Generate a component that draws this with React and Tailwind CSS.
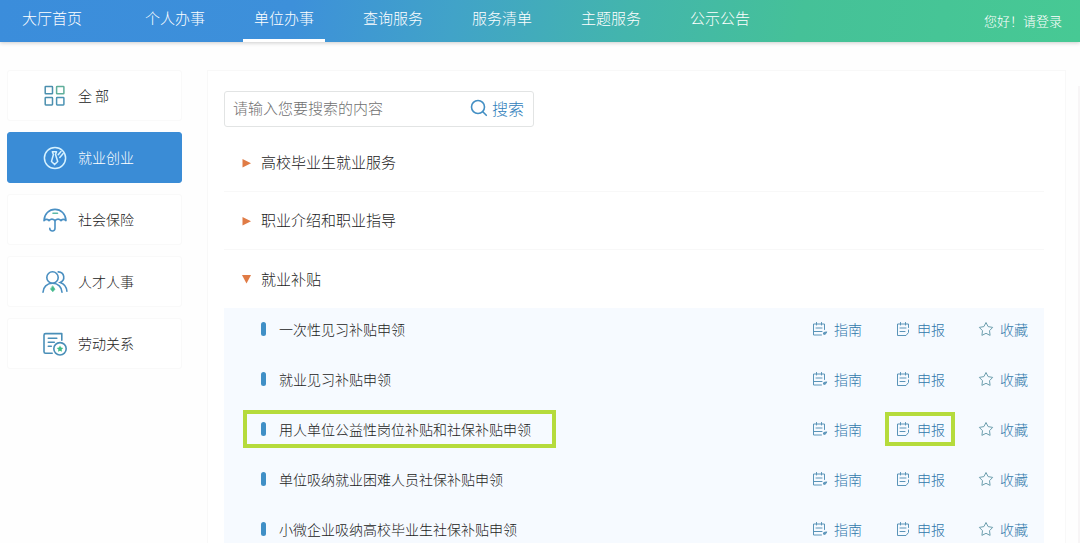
import React from "react";

const nav = ["大厅首页", "个人办事", "单位办事", "查询服务", "服务清单", "主题服务", "公示公告"];

function GridIcon() {
  return (
    <svg width="24" height="24" viewBox="0 0 24 24" fill="none" strokeWidth="1.5" aria-hidden="true">
      <rect x="2.2" y="2.5" width="7.300" height="7.300" rx="0.6" stroke="#4b8fae" />
      <rect x="13.6" y="2.5" width="7.300" height="7.300" rx="0.6" stroke="#5fae9a" />
      <rect x="2.2" y="13.6" width="7.300" height="7.300" rx="0.6" stroke="#4b8fae" />
      <rect x="13.6" y="13.6" width="7.300" height="7.300" rx="0.6" stroke="#4b93b4" />
    </svg>
  );
}

function TieIcon() {
  return (
    <svg width="24" height="24" viewBox="0 0 24 24" fill="none" stroke="#d6f2ff" strokeWidth="1.5" strokeLinecap="round" strokeLinejoin="round" aria-hidden="true">
      <circle cx="12" cy="12" r="10.6" />
      <path d="M9.3 5.8h4.2l-1 2.7 2.2 6.9-3.1 3.2-3.1-3.2 1.9-6.9z" />
      <path d="M15.200 8.800l2.800-3.200M16.800 11.500l3.400-4" />
    </svg>
  );
}

function UmbrellaIcon() {
  return (
    <svg width="24" height="24" viewBox="0 0 24 24" fill="none" stroke="#4a90c4" strokeWidth="1.600" strokeLinecap="round" strokeLinejoin="round" aria-hidden="true">
      <path d="M1 12.6C1.3 6 6 1.4 12 1.4S22.700 6 23 12.600c-1.600-1.500-3.500-1.500-5 0-1.700-1.700-4.200-1.700-6 0-1.800-1.700-4.300-1.700-6 0-1.500-1.500-3.400-1.500-5 0z" />
      <path d="M12 12.600v7.600c0 3.600-5.200 3.600-5.200.2" />
      <path d="M10 5.200h4.500" stroke="#5bb9a8" />
    </svg>
  );
}

function PeopleIcon() {
  return (
    <svg width="26" height="24" viewBox="0 0 26 24" fill="none" stroke="#4a8fc0" strokeWidth="1.600" strokeLinecap="round" aria-hidden="true">
      <circle cx="10.500" cy="7.500" r="5.700" />
      <path d="M1 22.300c.2-5.200 3.800-9 9.500-9s9.300 3.800 9.500 9" />
      <path d="M16.200 1.900c6.600.2 7.400 8.400 2 10.600 3.900 1.400 6.400 4.700 6.700 8.800" />
      <path d="M10.800 16l2.200 3.200-2.200 2.600-2.200-2.600z" fill="#45b98d" stroke="#45b98d" strokeWidth="0.6" />
    </svg>
  );
}

function DocumentStarIcon() {
  return (
    <svg width="24" height="24" viewBox="0 0 24 24" fill="none" stroke="#4a8fb8" strokeWidth="1.600" strokeLinecap="round" strokeLinejoin="round" aria-hidden="true">
      <path d="M18.800 8.200V1.600H2.600C1.500 1.600 1 2.200 1 3.200v16.600c0 .9.600 1.400 1.600 1.400h6.600" />
      <path d="M5.300 6.300h8.500M5.300 10.300h6M5.300 14.300h3" />
      <circle cx="17" cy="16.800" r="6.200" />
      <path d="M17 13.500l1 2.100 2.300.3-1.700 1.600.4 2.300-2-1.100-2 1.100.4-2.300-1.700-1.600 2.300-.3z" fill="#3fbd86" stroke="none" />
    </svg>
  );
}

const categories = [
  { label: "全 部", Icon: GridIcon },
  { label: "就业创业", Icon: TieIcon, active: true },
  { label: "社会保险", Icon: UmbrellaIcon },
  { label: "人才人事", Icon: PeopleIcon },
  { label: "劳动关系", Icon: DocumentStarIcon },
];

function GuideIcon() {
  return (
    <svg width="16" height="16" viewBox="0 0 16 16" fill="none" stroke="#5a94b8" strokeLinecap="round" strokeLinejoin="round" aria-hidden="true">
      <path d="M12.500 8.500V3H1.500v11H9.500" />
      <path d="M4.500 1.500V4M9.500 1.500V4M4 7H10M1.500 10.500H10" />
      <path d="M11.500 12.800l.3-1.300 3-.6-1.400 2.200z" fill="#4d8db8" />
    </svg>
  );
}

function ApplyIcon() {
  return (
    <svg width="16" height="16" viewBox="0 0 16 16" fill="none" stroke="#5a94b8" strokeLinecap="round" strokeLinejoin="round" aria-hidden="true">
      <path d="M13.500 6.500V3H2.500v11.500h8.500l2.500-3V9" />
      <path d="M5.500 1.500V4M10.500 1.500V4M5 7H11M5 10.500H10" />
    </svg>
  );
}

function StarIcon() {
  return (
    <svg width="16" height="16" viewBox="0 0 16 16" fill="none" stroke="#6d9fae" strokeLinejoin="round" aria-hidden="true">
      <path d="M8 1.500l2.100 4.100 4.600.8-3.200 3.300.6 4.700L8 12.300l-4.100 2.100.6-4.700L1.300 6.400l4.600-.8z" />
    </svg>
  );
}

const actions = [
  { label: "指南", Icon: GuideIcon },
  { label: "申报", Icon: ApplyIcon },
  { label: "收藏", Icon: StarIcon },
];

const services = [
  { name: "一次性见习补贴申领" },
  { name: "就业见习补贴申领" },
  { name: "用人单位公益性岗位补贴和社保补贴申领", marked: true },
  { name: "单位吸纳就业困难人员社保补贴申领" },
  { name: "小微企业吸纳高校毕业生社保补贴申领" },
];

function Group({ title, open }) {
  return (
    <button
      type="button"
      aria-expanded={!!open}
      className={`flex h-[58px] w-full items-center gap-2.5 pl-[18px] text-left text-[15px] text-[#222] ${open ? "" : "border-b border-[#f8f8f8]"}`}
    >
      <svg width="9" height="10" viewBox="0 0 9 10" fill="#e07b45" aria-hidden="true">
        {open ? <path d="M0 1h9L4.500 9.500z" /> : <path d="M0.500 1v8.500L9 5.300z" />}
      </svg>
      {title}
    </button>
  );
}

function Service({ name, marked }) {
  return (
    <li className="flex h-[42px] items-center justify-between pr-4 pl-[37px]">
      <a href="#" className="relative flex items-center gap-[13px] text-sm text-[#222]">
        <span className="h-3.5 w-[5px] rounded-sm bg-[#3f8fc6]" />
        {name}
        {marked && <span className="pointer-events-none absolute -inset-y-[9px] -right-[25px] -left-[18px] border-4 border-[#b5db3c]" />}
      </a>
      <div className="flex items-center gap-[33px]">
        {actions.map(({ label, Icon }) => (
          <a key={label} href="#" className="relative flex items-center gap-1.5 text-sm text-[#2f77ab]">
            <Icon />
            {label}
            {marked && label === "申报" && (
              <span className="pointer-events-none absolute -inset-x-[10px] -inset-y-[7px] border-4 border-[#b5db3c]" />
            )}
          </a>
        ))}
      </div>
    </li>
  );
}

export default function App() {
  return (
    <div className="h-screen overflow-hidden bg-[#fefefe] font-['Noto_Sans_CJK_SC',sans-serif] font-light">
      <header className="flex h-[42px] items-stretch justify-between bg-[linear-gradient(100deg,#3b8ddb_0%,#3d90da_27%,#41a3c8_42%,#43b5ad_58%,#45c198_74%,#47c994_100%)] pr-[18px] pl-[11px] shadow-[0_1px_4px_rgba(0,0,0,0.2)]">
        <nav className="flex gap-[27px]">
          {nav.map((item, i) => (
            <a
              key={item}
              href="#"
              aria-current={i === 2 ? "page" : undefined}
              className={`flex w-[82px] justify-center border-b-[3px] pt-[7px] text-[15px] leading-[22px] text-white ${i === 2 ? "border-white" : "border-transparent"} ${i === 0 ? "mr-3.5" : ""}`}
            >
              {item}
            </a>
          ))}
        </nav>
        <a href="#" className="self-center text-[13px] text-white">您好！请登录</a>
      </header>

      <div className="flex items-start pt-7">
        <aside className="mr-[25px] ml-[7px] flex w-[175px] shrink-0 flex-col gap-[11px]">
          {categories.map(({ label, Icon, active }) => (
            <a
              key={label}
              href="#"
              className={`flex h-[51px] items-center gap-2.5 rounded-[3px] border pl-[34px] text-sm ${active ? "border-[#3a8cd6] bg-[#3a8cd6] text-white" : "border-[#f9f9f9] bg-white text-[#222]"}`}
            >
              <span className="flex w-[26px] justify-center"><Icon /></span>
              <span className="pb-0.5">{label}</span>
            </a>
          ))}
        </aside>

        <main className="mr-3 min-h-[520px] flex-1 border border-[#f8f8f8] bg-white pt-5 pr-[21px] pl-4">
          <form className="flex h-9 w-[310px] items-center rounded-[3px] border border-[#e2e4e4] bg-white pr-[9px] pb-0.5 pl-2" onSubmit={(e) => e.preventDefault()}>
            <input
              type="text"
              aria-label="搜索内容"
              placeholder="请输入您要搜索的内容"
              className="min-w-0 flex-1 bg-transparent text-[15px] text-[#444] outline-none placeholder:text-[#707070]"
            />
            <button type="submit" className="flex items-center gap-1 text-base text-[#2f80bb]">
              <svg width="18" height="18" viewBox="0 0 18 18" fill="none" stroke="#438fc4" strokeWidth="1.600" strokeLinecap="round" aria-hidden="true">
                <circle cx="8" cy="8" r="6.500" />
                <path d="M12.800 12.800l3.500 3.500" />
              </svg>
              搜索
            </button>
          </form>

          <div className="mt-[7px]">
            <Group title="高校毕业生就业服务" />
            <Group title="职业介绍和职业指导" />
            <Group title="就业补贴" open />
          </div>
          <ul className="flex flex-col gap-2 bg-[#f6faff] pb-4">
            {services.map((s) => (
              <Service key={s.name} {...s} />
            ))}
          </ul>
        </main>
        <div className="mt-4 w-0.5 self-stretch bg-[#f7f5f6]" />
      </div>
    </div>
  );
}
